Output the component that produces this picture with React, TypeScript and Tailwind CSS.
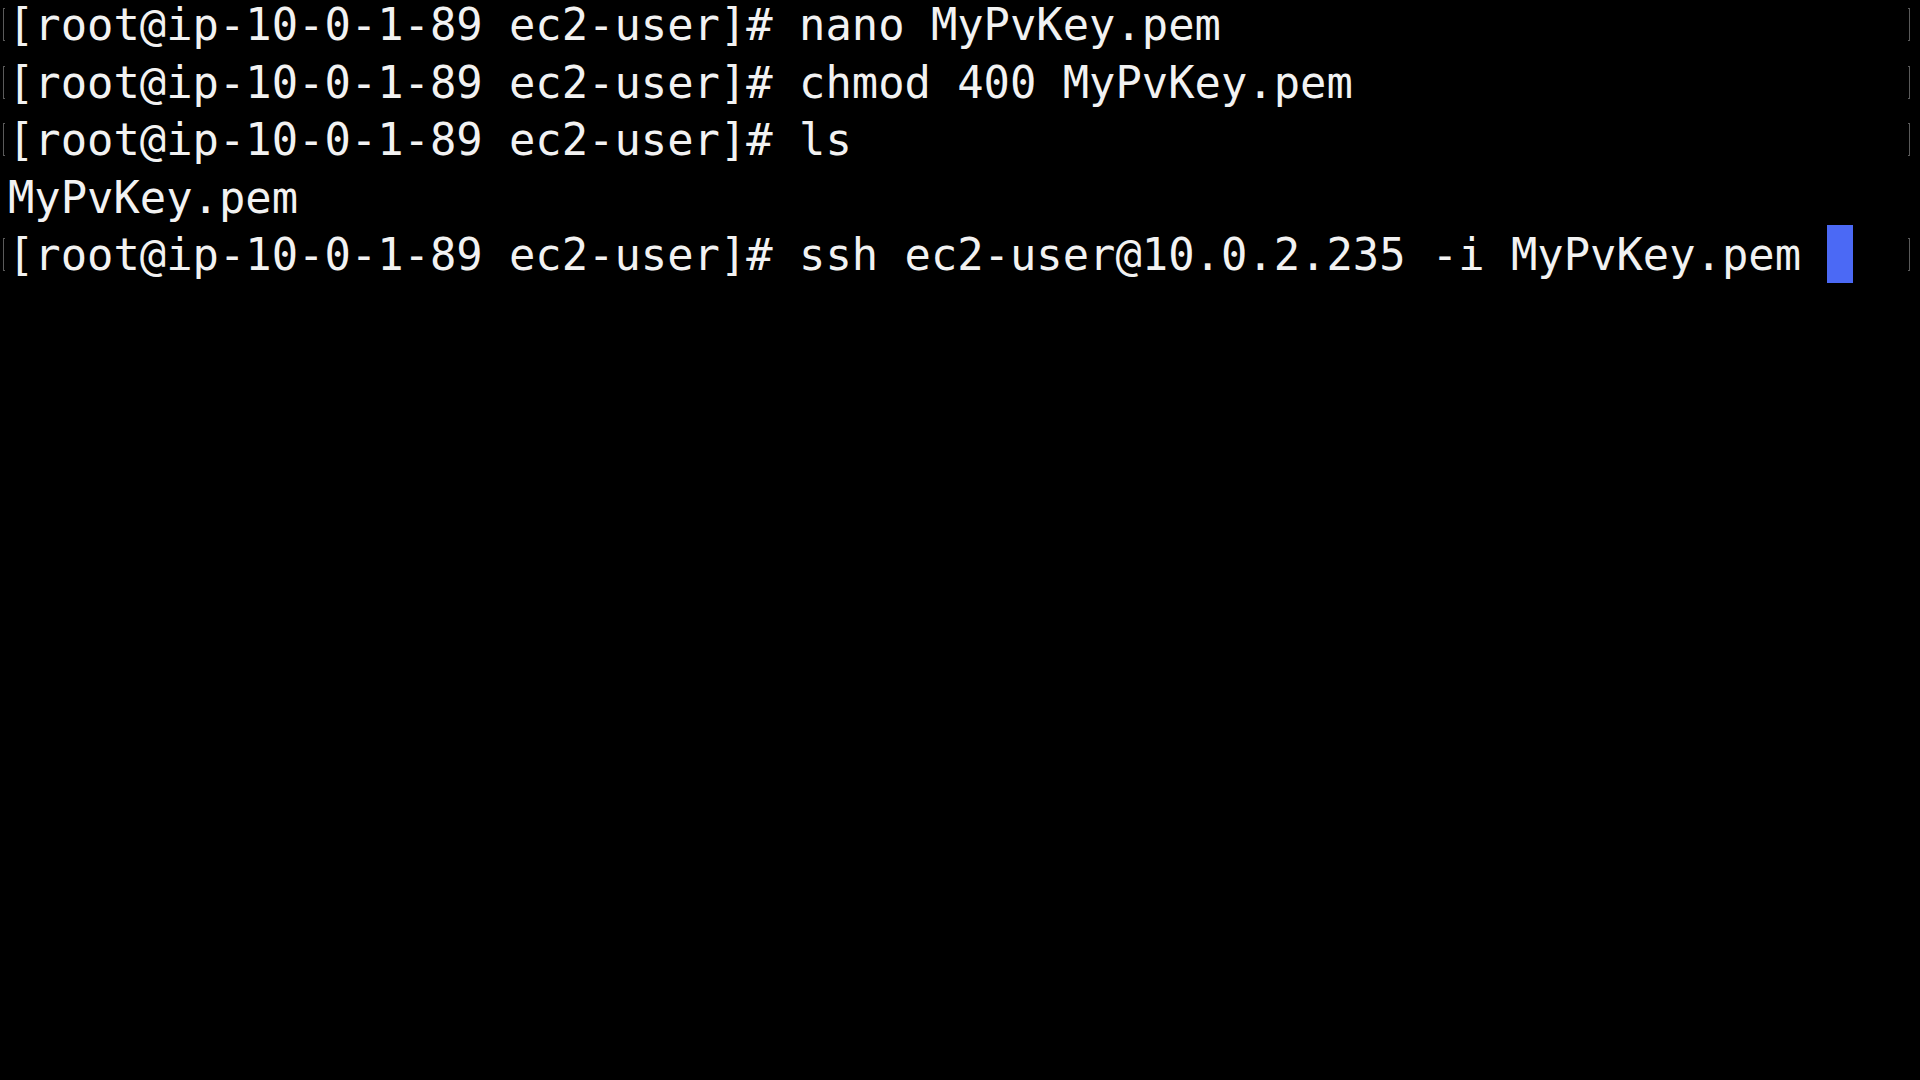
const lines: { text: string; prompt: boolean; cursor?: boolean }[] = [
  { text: "[root@ip-10-0-1-89 ec2-user]# nano MyPvKey.pem", prompt: true },
  { text: "[root@ip-10-0-1-89 ec2-user]# chmod 400 MyPvKey.pem", prompt: true },
  { text: "[root@ip-10-0-1-89 ec2-user]# ls", prompt: true },
  { text: "MyPvKey.pem", prompt: false },
  { text: "[root@ip-10-0-1-89 ec2-user]# ssh ec2-user@10.0.2.235 -i MyPvKey.pem ", prompt: true, cursor: true },
];

function Mark({ side }: { side: "left" | "right" }) {
  return (
    <span
      className={
        side === "left"
          ? "mt-[12px] h-[33px] w-[2px] shrink-0 border-y border-l border-[#5a5a5a]"
          : "mt-[12px] h-[33px] w-[2px] shrink-0 border-y border-r border-[#5a5a5a]"
      }
    />
  );
}

export default function App() {
  return (
    <div className="h-screen w-full overflow-hidden bg-black">
      <div className="-mt-[4px] flex flex-col">
        {lines.map((line, i) => (
          <div key={i} className="flex h-[57.5px] items-start pl-[3px] pr-[10px]">
            {line.prompt ? <Mark side="left" /> : <span className="w-[2px] shrink-0" />}
            <pre className="ml-[3px] whitespace-pre font-['DejaVu_Sans_Mono',monospace] text-[43.8px] leading-[57.5px] text-[#f2f2f2]">
              {line.text}
              {line.cursor && <span className="inline-block h-[58px] w-[26px] -translate-y-[1px] bg-[#4b69f5] align-top" />}
            </pre>
            <div className="flex-1" />
            {line.prompt ? <Mark side="right" /> : null}
          </div>
        ))}
      </div>
    </div>
  );
}
